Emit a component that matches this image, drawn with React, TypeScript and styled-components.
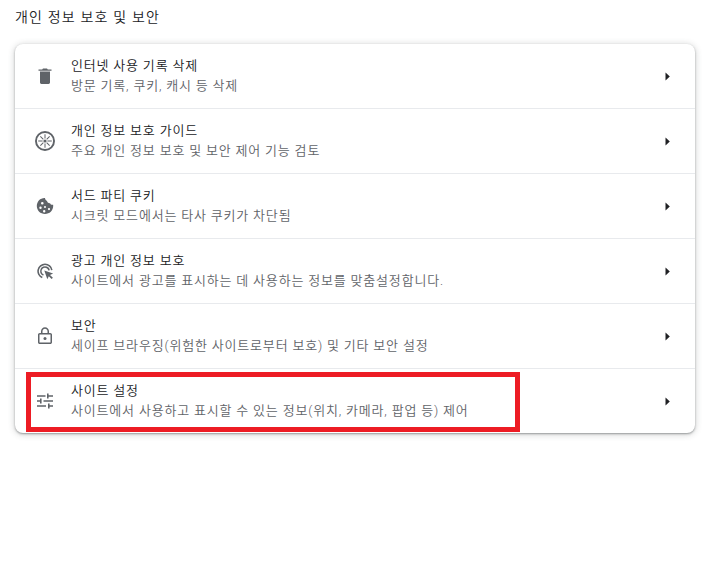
import React from "react";
import styled, { createGlobalStyle } from "styled-components";

const Global = createGlobalStyle`
  html, body { margin: 0; padding: 0; background: #fff; }
  body { font-family: "Roboto", "Noto Sans CJK KR", "Liberation Sans", sans-serif; }
`;

const Page = styled.div`
  width: 717px;
  height: 580px;
  padding: 8px 22px 0 15px;
  box-sizing: border-box;
  overflow: hidden;
`;

const Heading = styled.h2`
  margin: 0 0 17px;
  height: 19px;
  line-height: 19px;
  font-size: 14px;
  font-weight: 350;
  letter-spacing: 1.2px;
  color: #202124;
`;

const Card = styled.section`
  position: relative;
  background: #fff;
  border-radius: 8px;
  box-shadow: 0 1px 2px rgba(60, 64, 67, 0.45), 0 1px 6px 1px rgba(60, 64, 67, 0.2);
`;

const Row = styled.div<{ $first?: boolean }>`
  display: flex;
  align-items: center;
  height: ${(p) => (p.$first ? 64 : 65)}px;
  box-sizing: border-box;
  border-top: ${(p) => (p.$first ? "none" : "1px solid #e8eaed")};
  padding: 0 25px 0 20px;
`;

const IconSlot = styled.div`
  width: 20px;
  height: 20px;
  flex: none;
  margin-right: 16px;
  color: #5f6368;
  svg { display: block; width: 20px; height: 20px; fill: currentColor; }
`;

const Texts = styled.div`
  flex: 1;
  min-width: 0;
`;

const Title = styled.div`
  font-size: 13px;
  font-weight: 350;
  line-height: 19px;
  letter-spacing: 0.82px;
  color: #202124;
  margin-bottom: 1px;
`;

const Sub = styled.div`
  font-size: 13px;
  font-weight: 350;
  line-height: 20px;
  letter-spacing: 0.82px;
  color: #5f6368;
  margin-bottom: 1px;
`;

const Arrow = styled.svg`
  flex: none;
  width: 5px;
  height: 9px;
  fill: #202124;
`;

const Highlight = styled.div`
  position: absolute;
  left: 11px;
  top: 328px;
  width: 494px;
  height: 60px;
  box-sizing: border-box;
  border: 5px solid #ed1c24;
  pointer-events: none;
`;

const Trash = () => (
  <svg viewBox="0 0 20 20"><path d="M5 16.6c0 .8.6 1.4 1.4 1.4h7.2c.8 0 1.4-.6 1.4-1.4V5.6H5v11zM16.5 3.4h-3.7L12 2.4H8l-.8 1H3.5v1.3h13V3.4z" /></svg>
);

const Guide = () => (
  <svg viewBox="0 0 20 20">
    <path fillRule="evenodd" d="M10 0a10 10 0 1 0 0 20 10 10 0 0 0 0-20zm0 1.9a8.1 8.1 0 1 1 0 16.2 8.1 8.1 0 0 1 0-16.2z" />
    <circle cx="10" cy="10" r="1.6" />
    <path d="M9.5 3.2h1v4.4h-1zM9.5 12.4h1v4.4h-1zM3.2 9.5h4.4v1H3.2zM12.4 9.5h4.4v1h-4.4zM5 5.7l.7-.7 3 3-.7.7zM11.3 12l.7-.7 3 3-.7.7zM14.3 5l.7.7-3 3-.7-.7zM8 11.3l.7.7-3 3-.7-.7z" />
  </svg>
);

const Cookie = () => (
  <svg viewBox="0 0 20 20">
    <path fillRule="evenodd" d="M9.5 2C5.2 2 1.8 5.6 1.8 10s3.6 8 8.2 8 8.2-3.6 8.2-8c0-.5 0-.9-.1-1.3-1.3.4-2.6-.3-3-1.5-1.5.3-2.9-.7-3-2.2-1.2-.3-2.1-1.5-2.1-2.9H9.5zM7.3 6a1.3 1.3 0 1 1 0 2.6 1.3 1.3 0 0 1 0-2.6zM5.5 10.5a1.2 1.2 0 1 1 0 2.4 1.2 1.2 0 0 1 0-2.4zM10 10a1 1 0 1 1 0 2 1 1 0 0 1 0-2zM9.2 14a1.2 1.2 0 1 1 0 2.4 1.2 1.2 0 0 1 0-2.4zM14 12a1.1 1.1 0 1 1 0 2.2 1.1 1.1 0 0 1 0-2.2z" />
  </svg>
);

const AdTarget = () => (
  <svg viewBox="0 0 20 20">
    <path d="M10 2.5a7.7 7.7 0 0 0-3 14.8l.6-1.5A6.1 6.1 0 1 1 16 9.2l1.6-.2A7.7 7.7 0 0 0 10 2.5z" />
    <path d="M10 5.2a5 5 0 0 0-1.8 9.6l.5-1.5A3.4 3.4 0 1 1 13.3 9.6l1.6-.3A5 5 0 0 0 10 5.2z" />
    <path d="M9.3 9.5l3 8.8 1.5-3.1 2.8 2.9 1.3-1.3-2.9-2.9 3.1-1.5z" />
  </svg>
);

const Lock = () => (
  <svg viewBox="0 0 20 20">
    <path fillRule="evenodd" d="M15.2 7H14V5.2C14 3 12.2 1.2 10 1.2S6 3 6 5.2V7H4.8C3.8 7 3 7.8 3 8.8v7.4c0 1 .8 1.8 1.8 1.8h10.4c1 0 1.8-.8 1.8-1.8V8.8c0-1-.8-1.8-1.8-1.8zM7.5 5.2C7.5 3.8 8.6 2.7 10 2.7s2.5 1.1 2.5 2.5V7h-5V5.2zM15.5 16.5h-11v-8h11v8z" />
    <circle cx="10" cy="12.5" r="1.5" />
  </svg>
);

const Sliders = () => (
  <svg viewBox="0 0 20 20"><path d="M2 4.2h8.500v1.600H2zM12 2.500h1.600v1.700H18v1.600h-4.400v1.800H12zM2 9.200h3V7.500h1.600v5H5v-1.700H2zM8.500 9.200H18v1.600H8.500zM2 14.200h9v1.600H2zM13 12.500h1.600v1.700H18v1.600h-3.400v1.800H13z" /></svg>
);

const items = [
  { icon: <Trash />, title: "인터넷 사용 기록 삭제", sub: "방문 기록, 쿠키, 캐시 등 삭제" },
  { icon: <Guide />, title: "개인 정보 보호 가이드", sub: "주요 개인 정보 보호 및 보안 제어 기능 검토" },
  { icon: <Cookie />, title: "서드 파티 쿠키", sub: "시크릿 모드에서는 타사 쿠키가 차단됨" },
  { icon: <AdTarget />, title: "광고 개인 정보 보호", sub: "사이트에서 광고를 표시하는 데 사용하는 정보를 맞춤설정합니다." },
  { icon: <Lock />, title: "보안", sub: "세이프 브라우징(위험한 사이트로부터 보호) 및 기타 보안 설정" },
  { icon: <Sliders />, title: "사이트 설정", sub: "사이트에서 사용하고 표시할 수 있는 정보(위치, 카메라, 팝업 등) 제어" },
];

export default function App() {
  return (
    <Page>
      <Global />
      <Heading>개인 정보 보호 및 보안</Heading>
      <Card>
        {items.map((it, i) => (
          <Row key={it.title} $first={i === 0}>
            <IconSlot>{it.icon}</IconSlot>
            <Texts>
              <Title>{it.title}</Title>
              <Sub>{it.sub}</Sub>
            </Texts>
            <Arrow viewBox="0 0 5 9"><path d="M.5 .5l4.3 4-4.3 4z" /></Arrow>
          </Row>
        ))}
        <Highlight />
      </Card>
    </Page>
  );
}
